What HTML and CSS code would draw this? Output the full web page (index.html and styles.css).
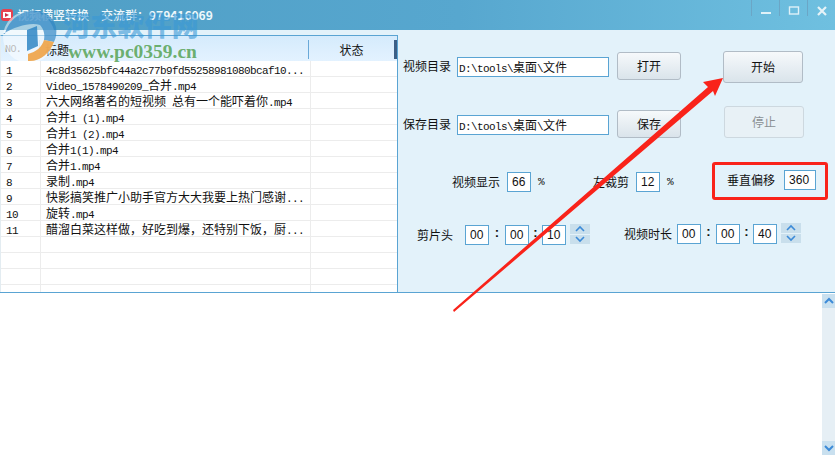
FILE: index.html
```html
<!DOCTYPE html>
<html lang="zh-CN">
<head>
<meta charset="utf-8">
<title>视频横竖转换</title>
<link rel="stylesheet" href="styles.css">
</head>
<body>
<div class="window">
  <header class="titlebar">
    <svg class="app-icon" width="12" height="12" viewBox="0 0 12 12"><rect width="12" height="12" rx="3" fill="#e8414f"/><rect x="2" y="3" width="8" height="6" fill="#fff"/><path d="M4 4l4 2-4 2z" fill="#c9304a"/></svg>
    <span class="title">视频横竖转换</span>
    <span class="title group">交流群：<span class="digits">979416069</span></span>
    <div class="winbtns">
      <div class="winbtn"><svg width="12" height="10" viewBox="0 0 12 10"><rect x="1" y="6" width="10" height="2" fill="#dff1f8"/></svg></div>
      <div class="winbtn"><svg width="12" height="10" viewBox="0 0 12 10"><rect x="1.5" y="1" width="9" height="7" fill="none" stroke="#dff1f8" stroke-width="1.4"/></svg></div>
      <div class="winbtn"><svg width="12" height="10" viewBox="0 0 12 10"><path d="M2 1l8 8M10 1L2 9" stroke="#e6f3f8" stroke-width="2.2"/></svg></div>
    </div>
  </header>

  <main class="main">
    <section class="list">
      <div class="head">
        <span class="h-no m">NO.</span>
        <span class="h-title">标题</span>
        <span class="h-state">状态</span>
        <span class="h-grip"></span>
      </div>
      <div class="row"><span class="c-no"><span class="m">1</span></span><span class="c-title"><span class="m">4c8d35625bfc44a2c77b9fd55258981080bcaf10...</span></span><span class="c-state"></span></div>
      <div class="row"><span class="c-no"><span class="m">2</span></span><span class="c-title"><span class="m">Video_1578490209_</span>合并<span class="m">.mp4</span></span><span class="c-state"></span></div>
      <div class="row"><span class="c-no"><span class="m">3</span></span><span class="c-title">六大网络著名的短视频<span class="m"> </span>总有一个能吓着你<span class="m">.mp4</span></span><span class="c-state"></span></div>
      <div class="row"><span class="c-no"><span class="m">4</span></span><span class="c-title">合并<span class="m">1 (1).mp4</span></span><span class="c-state"></span></div>
      <div class="row"><span class="c-no"><span class="m">5</span></span><span class="c-title">合并<span class="m">1 (2).mp4</span></span><span class="c-state"></span></div>
      <div class="row"><span class="c-no"><span class="m">6</span></span><span class="c-title">合并<span class="m">1(1).mp4</span></span><span class="c-state"></span></div>
      <div class="row"><span class="c-no"><span class="m">7</span></span><span class="c-title">合并<span class="m">1.mp4</span></span><span class="c-state"></span></div>
      <div class="row"><span class="c-no"><span class="m">8</span></span><span class="c-title">录制<span class="m">.mp4</span></span><span class="c-state"></span></div>
      <div class="row"><span class="c-no"><span class="m">9</span></span><span class="c-title">快影搞笑推广小助手官方大大我要上热门感谢<span class="m">...</span></span><span class="c-state"></span></div>
      <div class="row"><span class="c-no"><span class="m">10</span></span><span class="c-title">旋转<span class="m">.mp4</span></span><span class="c-state"></span></div>
      <div class="row"><span class="c-no"><span class="m">11</span></span><span class="c-title">醋溜白菜这样做，好吃到爆，还特别下饭，厨<span class="m">...</span></span><span class="c-state"></span></div>
      <div class="row"><span class="c-no"></span><span class="c-title"></span><span class="c-state"></span></div>
      <div class="row"><span class="c-no"></span><span class="c-title"></span><span class="c-state"></span></div>
      <div class="row"><span class="c-no"></span><span class="c-title"></span><span class="c-state"></span></div>
      <div class="row"><span class="c-no"></span><span class="c-title"></span><span class="c-state"></span></div>
    </section>

    <section class="controls">
      <div class="top">
        <div class="dirs">
          <div class="dir">
            <label class="lbl">视频目录</label>
            <div class="path"><span class="m">D:\tools\</span>桌面<span class="m">\</span>文件</div>
            <button class="btn small">打开</button>
          </div>
          <div class="dir">
            <label class="lbl">保存目录</label>
            <div class="path"><span class="m">D:\tools\</span>桌面<span class="m">\</span>文件</div>
            <button class="btn small">保存</button>
          </div>
        </div>
        <div class="actions">
          <button class="btn big">开始</button>
          <button class="btn big stop" disabled>停止</button>
        </div>
      </div>

      <div class="params">
        <div class="pair first">
          <label class="lbl">视频显示</label>
          <input class="num" value="66" readonly>
          <span class="pct m">%</span>
        </div>
        <div class="pair second">
          <label class="lbl">左裁剪</label>
          <input class="num" value="12" readonly>
          <span class="pct m">%</span>
        </div>
        <div class="offset">
          <label class="lbl">垂直偏移</label>
          <input class="num wide" value="360" readonly>
        </div>
      </div>

      <div class="times">
        <div class="time cut">
          <label class="lbl">剪片头</label>
          <input class="num" value="00" readonly><span class="colon c16">:</span>
          <input class="num" value="00" readonly><span class="colon c13">:</span>
          <input class="num" value="10" readonly>
          <div class="spin">
            <span class="spin-b"><svg width="12" height="8" viewBox="0 0 12 8"><path d="M2 6l4-4 4 4" fill="none" stroke="#3d8bd8" stroke-width="1.6"/></svg></span>
            <span class="spin-b"><svg width="12" height="8" viewBox="0 0 12 8"><path d="M2 2l4 4 4-4" fill="none" stroke="#3d8bd8" stroke-width="1.6"/></svg></span>
          </div>
        </div>
        <div class="time dur">
          <label class="lbl">视频时长</label>
          <input class="num" value="00" readonly><span class="colon c15">:</span>
          <input class="num" value="00" readonly><span class="colon c13">:</span>
          <input class="num" value="40" readonly>
          <div class="spin">
            <span class="spin-b"><svg width="12" height="8" viewBox="0 0 12 8"><path d="M2 6l4-4 4 4" fill="none" stroke="#3d8bd8" stroke-width="1.6"/></svg></span>
            <span class="spin-b"><svg width="12" height="8" viewBox="0 0 12 8"><path d="M2 2l4 4 4-4" fill="none" stroke="#3d8bd8" stroke-width="1.6"/></svg></span>
          </div>
        </div>
      </div>
    </section>
  </main>

  <section class="log">
    <div class="log-text"></div>
    <div class="scroll">
      <span class="sc-b"><svg width="12" height="8" viewBox="0 0 12 8"><path d="M2 6l4-4 4 4" fill="none" stroke="#3d8bd8" stroke-width="2"/></svg></span>
      <span class="sc-b"><svg width="12" height="8" viewBox="0 0 12 8"><path d="M2 2l4 4 4-4" fill="none" stroke="#3d8bd8" stroke-width="2"/></svg></span>
    </div>
  </section>
</div>

<svg class="arrow" width="835" height="455" viewBox="0 0 835 455">
  <polygon points="453,310 708,87 703,82 723,78 715,96 713,91 454,312" fill="#f9231a"/>
</svg>

<div class="watermark">
  <svg class="wm-logo" width="60" height="66" viewBox="0 0 60 66">
    <circle cx="29" cy="37" r="26" fill="#ffffff" opacity=".5"/>
    <path d="M5 34C9 18 24 9 38 11c9 1 15 7 18 16 1 5 0 11-2 15l-10-2c1-6 0-10-4-15-9-3-24 1-37 9z" fill="#2f86c4" opacity=".7"/>
    <path d="M27 30l10-4 1 20-11 5z" fill="#2f86c4" opacity=".85"/>
    <path d="M28 61c12 1 22-8 26-19l-10-2c-2 7-8 12-16 14z" fill="#eea64f" opacity=".95"/>
  </svg>
  <div class="wm-text">
    <div class="wm-cn">河东软件网</div>
    <div class="wm-url">www.pc0359.cn</div>
  </div>
</div>
</body>
</html>
```
FILE: styles.css
```css
* { box-sizing: border-box; }
html, body { margin: 0; padding: 0; }
body {
  width: 835px;
  height: 455px;
  overflow: hidden;
  position: relative;
  background: #fff;
  font: 12px/16px "Noto Sans CJK SC", "Liberation Sans", sans-serif;
  color: #111;
}
.m {
  font-family: "Liberation Mono", "Noto Sans CJK SC", monospace;
  font-size: 11px;
  letter-spacing: -0.6px;
  white-space: pre;
}
.window { display: flex; flex-direction: column; height: 455px; }

/* title bar */
.titlebar {
  height: 30px;
  flex: none;
  display: flex;
  align-items: center;
  padding-left: 1px;
  background: linear-gradient(90deg, #4f9ec5 0%, #57a7cf 55%, #6fc0e0 100%);
  color: #eef8fc;
}
.app-icon { margin-right: 4px; }
.title { font-size: 12px; font-weight: 500; }
.group { margin-left: 12px; }
.digits { font-weight: 700; }
.winbtns { margin-left: auto; display: flex; align-self: stretch; padding-bottom: 14px; }
.winbtn {
  width: 28px;
  display: flex;
  align-items: flex-end;
  justify-content: center;
  border-left: 1px solid #6ba6c6;
}

/* main */
.main {
  height: 263px;
  flex: none;
  display: flex;
  background: #e3f2fa;
  border-bottom: 1px solid #5aa4d3;
}
.list {
  width: 398px;
  flex: none;
  margin-top: 5px;
  background: #fff;
  border-top: 1px solid #5aa4d3;
  border-right: 1px solid #5aa4d3;
  border-left: 1px solid #e3ecf1;
  overflow: hidden;
}
.head {
  height: 25px;
  display: flex;
  align-items: center;
  padding-top: 1px;
  background: linear-gradient(180deg, #d5ebfc, #e3f2ff);
}
.h-no { width: 39px; padding-left: 4px; color: #777; font-size: 10px; height: 19px; line-height: 19px; border-right: 1px solid #bcd6e8; }
.h-title { width: 269px; padding-left: 5px; height: 19px; border-right: 1px solid #6aa9d8; line-height: 19px; }
.h-state { width: 85px; text-align: center; height: 19px; line-height: 19px; }
.h-grip { width: 3px; height: 19px; background: #3c5f86; }
.row { height: 16px; display: flex; border-bottom: 1px solid #ececec; }
.row > span { display: block; line-height: 15px; }
.c-no { width: 40px; padding-left: 5px; border-right: 1px solid #ececec; }
.c-title { width: 270px; padding-left: 5px; border-right: 1px solid #ececec; white-space: nowrap; overflow: hidden; }
.c-state { flex: 1; }

/* controls */
.controls { flex: 1; padding: 22px 0 0 5px; }
.lbl { flex: none; }
.top { display: flex; height: 86px; }
.dirs { display: flex; flex-direction: column; gap: 30px; }
.dir { display: flex; align-items: center; height: 28px; }
.path {
  width: 152px;
  height: 20px;
  margin: 2px 8px 0 6px;
  padding-left: 1px;
  line-height: 18px;
  background: #fff;
  border: 1px solid #5aa4d3;
  white-space: nowrap;
}
.btn {
  font: inherit;
  color: #111;
  padding: 0;
  border: 1px solid #b1bcc6;
  border-radius: 3px;
  background: linear-gradient(180deg, #f6f9fb, #dae4eb);
}
.small { width: 64px; height: 28px; }
.big { width: 80px; height: 32px; }
.actions { display: flex; flex-direction: column; gap: 23px; margin: -1px 0 0 42px; }
.stop {
  margin-left: 1px;
  color: #8b9094;
  background: #e8f1f6;
  border-color: #cdd8df;
}
.num {
  width: 24px;
  height: 20px;
  flex: none;
  padding: 0 0 0 4px;
  font: 12px "Liberation Sans", sans-serif;
  color: #111;
  background: #fff;
  border: 1px solid #5aa4d3;
  border-radius: 0;
  outline: none;
}
.wide { width: 32px; }
.pct { width: 6px; }

.params { display: flex; align-items: flex-start; height: 22px; margin-top: 32px; }
.pair { display: flex; align-items: center; gap: 7px; padding-top: 2px; }
.first { margin-left: 49px; }
.second { margin-left: 49px; }
.offset {
  display: flex;
  align-items: center;
  gap: 9px;
  margin: -8px 0 0 39px;
  padding: 5px 9px 7px 12px;
  border: 3px solid #f9231a;
  border-radius: 3px;
  height: 38px;
}

.times { display: flex; align-items: flex-start; margin-top: 32px; }
.time { display: flex; align-items: center; }
.cut { margin: 1px 0 0 14px; }
.cut .lbl { margin-right: 12px; }
.dur { margin-left: 34px; }
.dur .lbl { margin-right: 5px; }
.colon {
  flex: none;
  text-align: center;
  font: bold 13px/14px "Liberation Sans", sans-serif;
  padding-bottom: 4px;
}
.c16 { width: 16px; }
.c15 { width: 15px; }
.c13 { width: 13px; }
.spin {
  width: 20px;
  height: 20px;
  margin: -2px 0 0 4px;
  display: flex;
  flex-direction: column;
  gap: 1px;
  flex: none;
}
.spin-b {
  flex: 1;
  display: flex;
  align-items: center;
  justify-content: center;
  background: #c9dfec;
}

/* log */
.log { flex: 1; display: flex; background: #fff; padding-top: 1px; }
.log-text { flex: 1; }
.scroll {
  width: 13px;
  display: flex;
  flex-direction: column;
  justify-content: space-between;
  background: #e6eff5;
}
.sc-b {
  height: 14px;
  display: flex;
  align-items: center;
  justify-content: center;
  background: #c9e0ef;
}

/* overlays */
.arrow { position: absolute; left: 0; top: 0; pointer-events: none; }
.watermark {
  position: absolute;
  left: 0;
  top: 0;
  display: flex;
  pointer-events: none;
}
.wm-logo { flex: none; }
.wm-text { margin: 12px 0 0 3px; }
.wm-cn {
  font: 900 27px/26px "Noto Sans CJK SC", sans-serif;
  color: rgba(58, 152, 214, .6);
  letter-spacing: .2px;
}
.wm-url {
  margin: 3px 0 0 5px;
  font: bold 19.5px/22px "Liberation Serif", serif;
  color: rgba(92, 166, 92, .9);
}
```
